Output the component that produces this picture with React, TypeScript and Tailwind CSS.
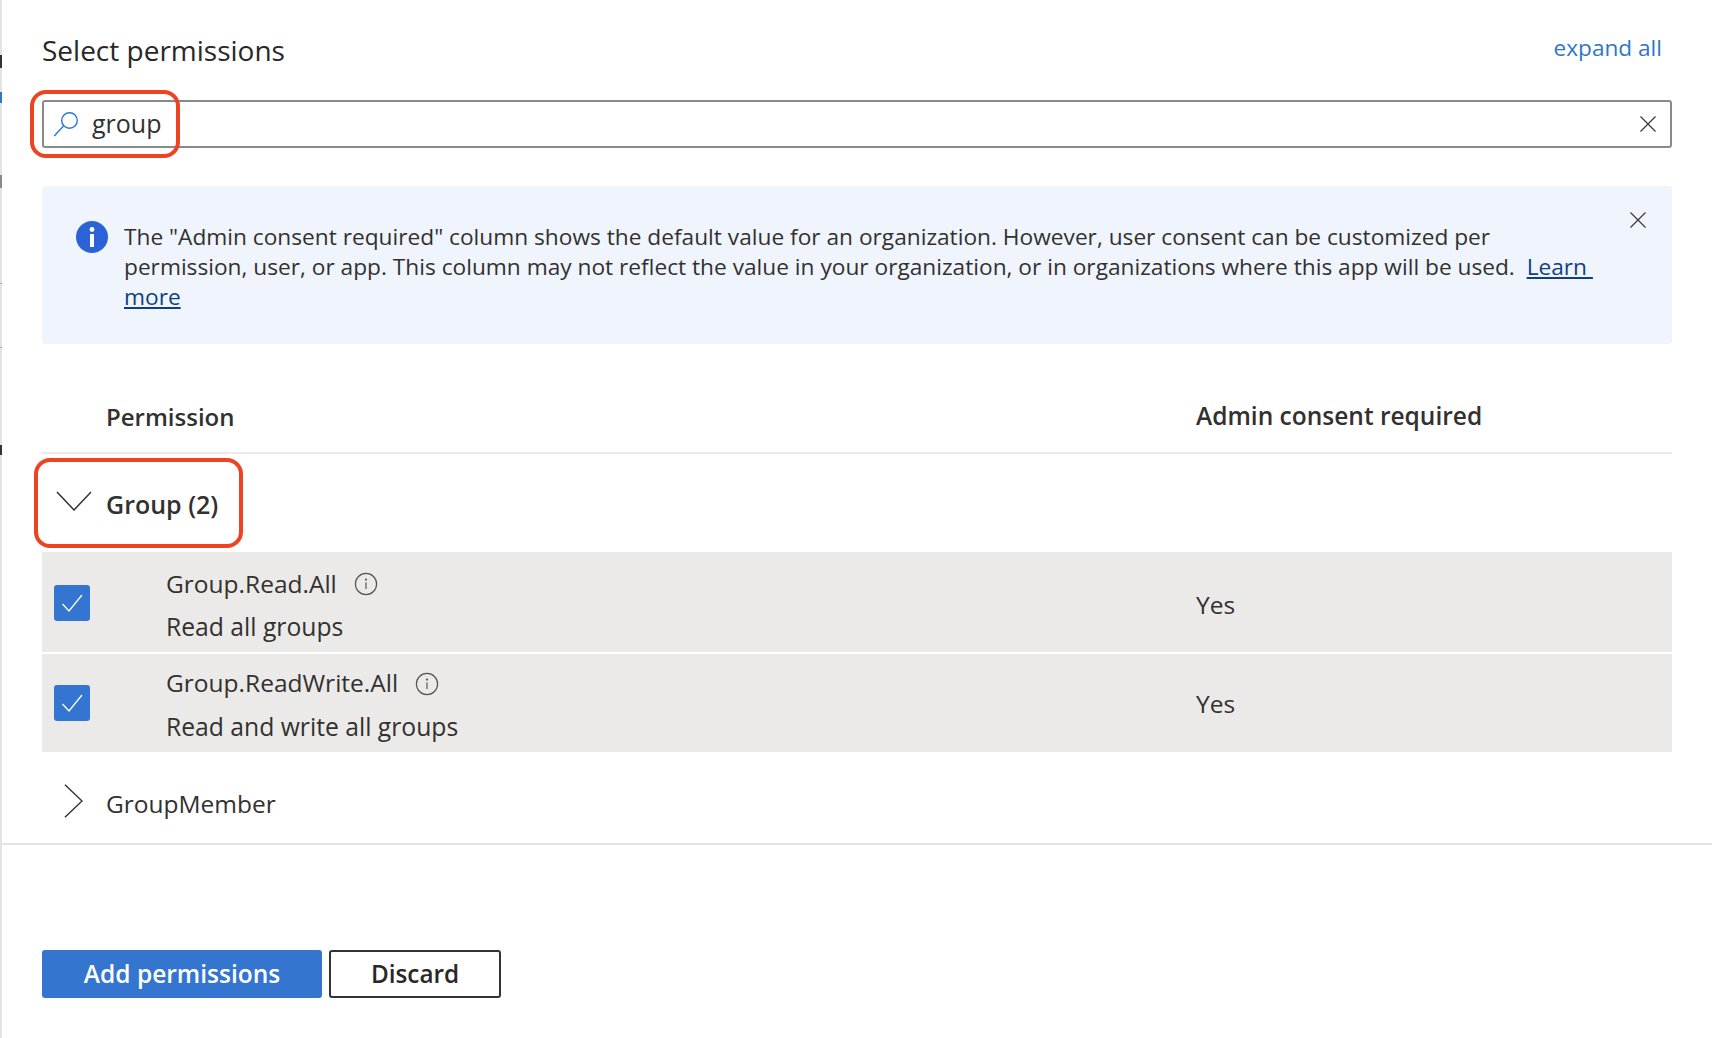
const font = { fontFamily: '"Open Sans", "Noto Sans", sans-serif' }

function CloseIcon({ className }: { className?: string }) {
  return (
    <svg viewBox="0 0 18 18" className={className} fill="none" stroke="#3b3b3b" strokeWidth="1.3">
      <path d="M1.5 1.5 16.5 16.5M16.5 1.5 1.5 16.5" />
    </svg>
  )
}

function InfoCircle() {
  return (
    <svg viewBox="0 0 24 24" className="ml-[17px] h-[24px] w-[24px] shrink-0" fill="none" stroke="#555" strokeWidth="1.2">
      <circle cx="12" cy="12" r="10.6" />
      <path d="M12 10.6v6.4" />
      <circle cx="12" cy="7.6" r="0.5" />
    </svg>
  )
}

function Checkbox() {
  return (
    <div className="flex h-[36px] w-[36px] items-center justify-center rounded-[3px] bg-[#3375d0]">
      <svg viewBox="0 0 24 24" className="h-[24px] w-[24px]" fill="none" stroke="#fff" strokeWidth="1.3">
        <path d="M2.5 13 9 20 22 4" />
      </svg>
    </div>
  )
}

function PermissionRow({ name, desc, rowClass, boxClass, textClass, yesClass }: { name: string; desc: string; rowClass: string; boxClass: string; textClass: string; yesClass: string }) {
  return (
    <div className={`flex items-center bg-[#ebeae8] text-[24.5px] text-[#323130] ${rowClass}`}>
      <div className={`w-[124px] pl-[12px] ${boxClass}`}>
        <Checkbox />
      </div>
      <div className={`w-[1030px] ${textClass}`}>
        <div className="flex h-[43px] items-center">
          {name}
          <InfoCircle />
        </div>
        <div className="flex h-[43px] items-center text-[24.7px]">{desc}</div>
      </div>
      <div className={yesClass}>Yes</div>
    </div>
  )
}

// bits of the page behind the panel that stick out on the left edge
function EdgeStrip() {
  return (
    <div className="relative w-[2px] shrink-0 bg-[#e3e3e3]">
      <div className="absolute left-0 top-[55px] h-[13px] w-[2px] bg-[#333]" />
      <div className="absolute left-0 top-[92px] h-[11px] w-[2px] bg-[#2f76c9]" />
      <div className="absolute left-0 top-[175px] h-[13px] w-[2px] bg-[#8a8a8a]" />
      <div className="absolute left-0 top-[283px] h-[1px] w-[2px] bg-[#aaa]" />
      <div className="absolute left-0 top-[347px] h-[1px] w-[2px] bg-[#aaa]" />
      <div className="absolute left-0 top-[445px] h-[10px] w-[2px] bg-[#333]" />
    </div>
  )
}

export default function App() {
  return (
    <div className="flex h-[1038px] w-[1712px] overflow-hidden bg-white text-[#323130]" style={font}>
      <EdgeStrip />
      <div className="min-w-0 flex-1">
        <div className="pl-[40px] pr-[40px]">
          <div className="flex h-[100px] items-center justify-between">
            <h1 className="text-[28px] text-[#292827]">Select permissions</h1>
            <a className="mb-[5px] mr-[10px] text-[22.6px] text-[#2f76c9]">expand all</a>
          </div>

          <div className="relative flex h-[48px] items-center rounded-[3px] border-2 border-[#8a8a8a] bg-white pl-[9px] pr-[13px]">
            <svg viewBox="0 0 26 26" className="h-[26px] w-[26px]" fill="none" stroke="#2f76c9" strokeWidth="1.4">
              <circle cx="16.5" cy="9.5" r="7.8" />
              <path d="M10.5 15 1.2 25" />
            </svg>
            <span className="ml-[13px] flex-1 text-[25px] text-[#323130]">group</span>
            <CloseIcon className="h-[18px] w-[18px]" />
            <div className="absolute -left-[14px] -top-[12px] h-[68px] w-[150px] rounded-[16px] border-4 border-[#ee4323]" />
          </div>

          <div className="relative mt-[38px] flex h-[158px] rounded-[3px] bg-[#f0f5fd] pl-[34px] pr-[68px] pt-[35px]">
            <svg viewBox="0 0 32 32" className="h-[32px] w-[32px] shrink-0">
              <circle cx="16" cy="16" r="16" fill="#2b63d6" />
              <rect x="14" y="13" width="4" height="13" fill="#fff" />
              <circle cx="16" cy="8.5" r="2.4" fill="#fff" />
            </svg>
            <p className="ml-[16px] mt-[1px] text-[22.7px] leading-[30px] text-[#323130]">
              The "Admin consent required" column shows the default value for an organization. However, user consent can be customized per permission, user, or app. This column may not reflect the value in your organization, or in organizations where this app will be used.{'\u00a0 '}
              <a className="text-[#0f3f82] underline">Learn{'\u00a0'}<wbr />more</a>
            </p>
            <CloseIcon className="absolute right-[25px] top-[25px] h-[18px] w-[18px]" />
          </div>

          <div className="flex h-[110px] items-end border-b-2 border-[#ebebeb] pb-[17px] font-semibold">
            <div className="w-[1154px] pl-[64px] text-[24px]">Permission</div>
            <div className="text-[24.5px]">Admin consent required</div>
          </div>

          <div className="relative flex h-[98px] items-center">
            <svg viewBox="0 0 36 20" className="mb-[4px] ml-[14px] h-[20px] w-[36px]" fill="none" stroke="#333" strokeWidth="1.5">
              <path d="M1 1 18 19 35 1" />
            </svg>
            <span className="ml-[14px] mt-[3px] text-[25px] font-semibold">Group (2)</span>
            <div className="absolute -left-[8px] top-[4px] h-[90px] w-[209px] rounded-[16px] border-4 border-[#ee4323]" />
          </div>

          <PermissionRow name="Group.Read.All" desc="Read all groups" rowClass="h-[100px]" boxClass="pt-[2px]" textClass="pt-[7px]" yesClass="pt-[6px]" />
          <div className="mt-[2px]">
            <PermissionRow name="Group.ReadWrite.All" desc="Read and write all groups" rowClass="h-[98px]" boxClass="pt-0" textClass="pt-[4px]" yesClass="pt-[2px]" />
          </div>

          <div className="flex h-[91px] items-center pt-[14px]">
            <svg viewBox="0 0 20 36" className="mb-[8px] ml-[22px] h-[36px] w-[19px]" fill="none" stroke="#333" strokeWidth="1.5">
              <path d="M1 1 19 18 1 35" />
            </svg>
            <span className="ml-[23px] text-[24.5px]">GroupMember</span>
          </div>
        </div>

        <div className="border-t-2 border-[#e3e3e3] pl-[40px] pt-[105px]">
          <div className="flex gap-[7px]">
            <button className="h-[48px] w-[280px] rounded-[3px] bg-[#3375cf] text-[24.5px] font-semibold text-white">Add permissions</button>
            <button className="h-[48px] w-[172px] rounded-[3px] border-2 border-[#333] text-[24.3px] font-semibold text-[#292827]">Discard</button>
          </div>
        </div>
      </div>
    </div>
  )
}
